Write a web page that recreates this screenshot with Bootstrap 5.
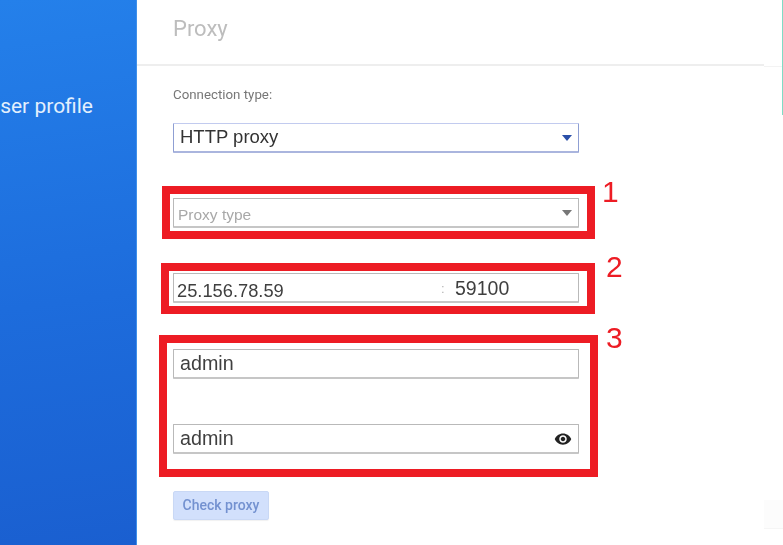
<!DOCTYPE html>
<html lang="en">
<head>
<meta charset="utf-8">
<title>Proxy</title>
<link href="https://cdn.jsdelivr.net/npm/bootstrap@5.3.0/dist/css/bootstrap.min.css" rel="stylesheet">
<style>
html,body{height:100%;margin:0;overflow:hidden;background:#fff;font-family:"Liberation Sans",Arial,sans-serif}
.stage{width:783px;height:545px;position:relative;overflow:hidden;filter:blur(.45px)}
.side-panel{width:137px;background:linear-gradient(172deg,#2480ea 0%,#1d6cdc 55%,#1a5fd0 100%);border-right:1px solid #3f90ea;padding-top:93px;overflow:hidden}
.side-title{font-family:Roboto,sans-serif;font-weight:400;font-size:21px;line-height:26px;color:#e3f0fd;white-space:nowrap;padding-right:43px}
.main-panel{width:627px}
.panel-head{height:66px;border-bottom:2px solid #eeeeee;padding-left:36px;padding-top:14px}
.panel-title{font-family:Roboto,sans-serif;font-size:22px;font-weight:400;line-height:30px;color:#bdbdbd;margin:0}
.panel-body{padding-left:36px;width:442px}
.conn-label{font-family:Roboto,sans-serif;font-size:13.3px;line-height:14px;color:#777;margin:22px 0 21px;display:block}
.fld{height:30px;width:406px;border:1px solid #b9b9b9;border-bottom:2px solid #c6c6c6;border-radius:1px;background-color:#fff;box-shadow:none;color:#3c3c3c;display:flex;align-items:center}
.fld:focus,.fld:focus-within{box-shadow:none}
select.fld{padding:0 20px 0 6px;background-position:right 3px center;background-size:16px 8px;background-repeat:no-repeat;line-height:26px}
.sel-active{font-size:18.5px;color:#333;padding-bottom:2px!important;border-color:#c2cbef #8f9fd3 #aab5de #8f9fd3;background-image:url("data:image/svg+xml,%3Csvg xmlns='http://www.w3.org/2000/svg' viewBox='0 0 16 8'%3E%3Cpath d='M3 1h10L8 7z' fill='%232a4fa8'/%3E%3C/svg%3E")}
.sel-empty{font-size:15.5px;color:#a8a8a8;padding-left:4px!important;padding-top:3px!important;background-image:url("data:image/svg+xml,%3Csvg xmlns='http://www.w3.org/2000/svg' viewBox='0 0 16 8'%3E%3Cpath d='M3 1h10L8 7z' fill='%23777'/%3E%3C/svg%3E")}
.gap-a{margin-top:45px}
.gap-b{margin-top:46px}
.bare-input{border:0;outline:0;background:transparent;padding:0;min-width:0;color:#3f3f3f}
.ip-host{font-size:18.3px;width:264px;margin-left:3px;margin-top:6px}
.ip-sep{font-size:13px;color:#b5b5b5;width:14px;margin-top:2px}
.ip-port{font-size:19.5px;width:100px;margin-top:2px}
.cred{font-size:19.7px;flex:1;margin-left:6px}
.eye-ico{width:18px;height:18px;margin-right:6px;flex:none}
.check-btn{margin-top:37px;width:96px;height:29px;padding:0;background:#d2e0fc;border:1px solid #c9d8f5;border-radius:2px;font-family:Roboto,sans-serif;font-weight:500;font-size:14px;color:#7391d0;box-shadow:0 1px 1px rgba(0,0,0,.06)}
.edge-strip{width:19px;height:545px;position:relative}
.edge-rule{height:1px;background:#f3f3f3;margin-top:66px}
.edge-block{height:29px;margin-top:433px;background:#fcfcfc;border-bottom:1px solid #f5f5f5}
.edge-line{position:absolute;right:0;top:0;width:1px;height:115px;background:#7fdcc5}
.mark-box{position:absolute;border:8px solid #ed1c24;pointer-events:none}
.mark-a{left:162px;top:186px;width:433px;height:53px}
.mark-b{left:161px;top:263px;width:434px;height:51px}
.mark-c{left:159px;top:335px;width:439px;height:142px}
.mark-num{position:absolute;font-family:"Liberation Sans",Arial,sans-serif;font-size:30px;line-height:30px;color:#ed1c24}
.num-a{left:602px;top:177px}
.num-b{left:606px;top:252px}
.num-c{left:606px;top:323px}
</style>
</head>
<body>
<div class="stage d-flex">
  <aside class="side-panel flex-shrink-0 d-flex justify-content-end align-items-start">
    <div class="side-title">User profile</div>
  </aside>
  <main class="main-panel flex-shrink-0">
    <div class="panel-head"><h1 class="panel-title">Proxy</h1></div>
    <form class="panel-body">
      <label class="conn-label">Connection type:</label>
      <select class="form-select fld sel-active" aria-label="Connection type"><option>HTTP proxy</option></select>
      <select class="form-select fld sel-empty gap-a" aria-label="Proxy type"><option>Proxy type</option></select>
      <div class="fld gap-a">
        <input class="bare-input ip-host" value="25.156.78.59" aria-label="Host">
        <span class="ip-sep">:</span>
        <input class="bare-input ip-port" value="59100" aria-label="Port">
      </div>
      <div class="fld gap-b"><input class="bare-input cred" value="admin" aria-label="Login"></div>
      <div class="fld gap-a">
        <input class="bare-input cred" value="admin" aria-label="Password">
        <svg class="eye-ico" viewBox="0 0 24 24" aria-hidden="true"><path fill="#222" d="M12 4.5C7 4.5 2.73 7.61 1 12c1.73 4.39 6 7.5 11 7.5s9.27-3.11 11-7.5c-1.73-4.39-6-7.5-11-7.5zM12 17c-2.76 0-5-2.24-5-5s2.24-5 5-5 5 2.24 5 5-2.24 5-5 5zm0-8c-1.66 0-3 1.34-3 3s1.34 3 3 3 3-1.34 3-3-1.34-3-3-3z"/></svg>
      </div>
      <button type="button" class="btn check-btn">Check proxy</button>
    </form>
  </main>
  <div class="edge-strip flex-shrink-0">
    <div class="edge-rule"></div>
    <div class="edge-block"></div>
    <div class="edge-line"></div>
  </div>
  <div class="mark-box mark-a"></div>
  <div class="mark-box mark-b"></div>
  <div class="mark-box mark-c"></div>
  <span class="mark-num num-a">1</span>
  <span class="mark-num num-b">2</span>
  <span class="mark-num num-c">3</span>
</div>
<script src="https://cdn.jsdelivr.net/npm/bootstrap@5.3.0/dist/js/bootstrap.bundle.min.js"></script>
</body>
</html>
